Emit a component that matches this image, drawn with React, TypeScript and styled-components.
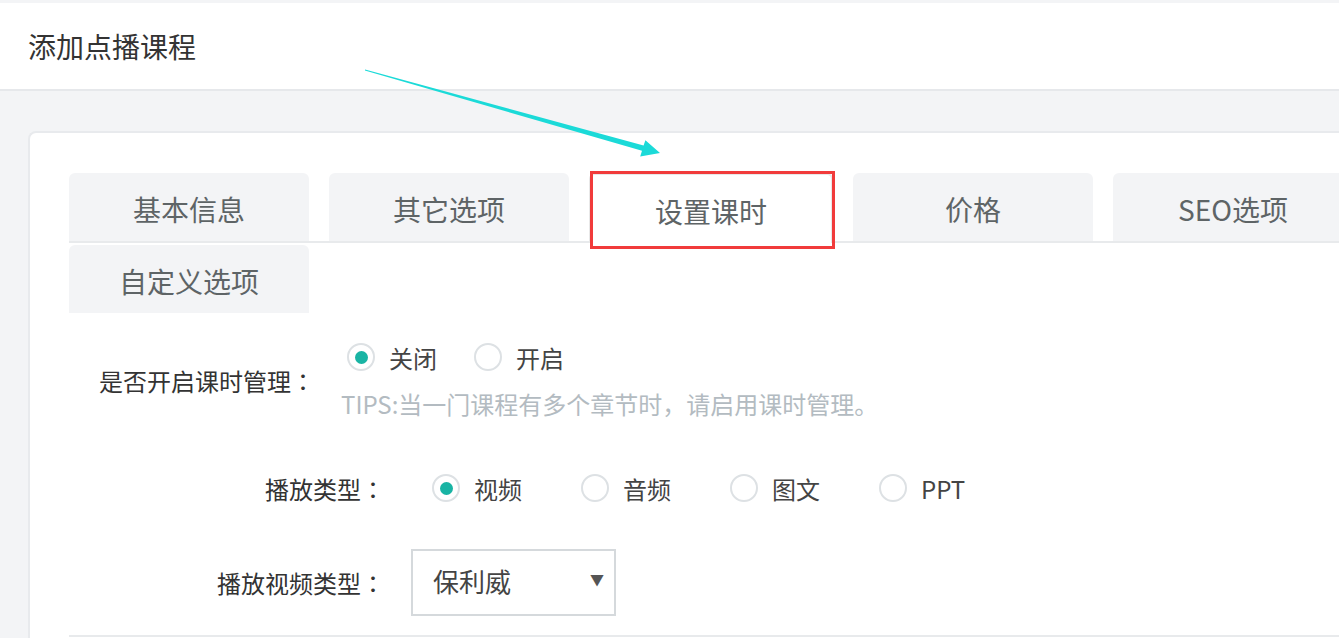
import React from 'react';
import styled, { createGlobalStyle } from 'styled-components';

const tabs = ['基本信息', '其它选项', '设置课时', '价格', 'SEO选项', '自定义选项'];
const activeTab = 2;

const App: React.FC = () => {
  return (
    <Page>
      <GlobalStyle />
      <Header>
        <Title>添加点播课程</Title>
      </Header>
      <Main>
        <Card>
          <TabBar>
            {tabs.map((t, i) => (
              <Tab key={t} $active={i === activeTab}>
                {t}
                {i === activeTab && <Highlight />}
              </Tab>
            ))}
          </TabBar>

          <FormRow $top={0}>
            <Label $width={246}>
              是否开启课时管理<Colon>：</Colon>
            </Label>
            <FieldBlock>
              <RadioGroup $offset={6} $spacing={37}>
                <RadioItem>
                  <RadioCircle $checked />
                  关闭
                </RadioItem>
                <RadioItem>
                  <RadioCircle />
                  开启
                </RadioItem>
              </RadioGroup>
              <Tips>TIPS:当一门课程有多个章节时，请启用课时管理。</Tips>
            </FieldBlock>
          </FormRow>

          <FormRow $top={48}>
            <Label $width={316}>
              播放类型<Colon>：</Colon>
            </Label>
            <RadioGroup $offset={21} $spacing={59}>
              <RadioItem>
                <RadioCircle $checked />
                视频
              </RadioItem>
              <RadioItem>
                <RadioCircle />
                音频
              </RadioItem>
              <RadioItem>
                <RadioCircle />
                图文
              </RadioItem>
              <RadioItem>
                <RadioCircle />
                PPT
              </RadioItem>
            </RadioGroup>
          </FormRow>

          <FormRow $top={43}>
            <Label $width={316}>
              播放视频类型<Colon>：</Colon>
            </Label>
            <Select>
              <span>保利威</span>
              <Caret>▼</Caret>
            </Select>
          </FormRow>

          <Divider />
        </Card>
      </Main>

      <Arrow viewBox="0 0 1339 638" width="1339" height="638">
        <polygon
          points="365.1,69.4 643.6,145.6 645.4,140.2 660,153 640.2,156.4 642,150.7 364.9,70.6"
          fill="#1bdad8"
        />
      </Arrow>
    </Page>
  );
};

export default App;

const GlobalStyle = createGlobalStyle`
  html, body {
    margin: 0;
    padding: 0;
    overflow: hidden;
    background: #f3f4f6;
  }
  body {
    font-family: "Noto Sans CJK SC", "Noto Sans", sans-serif;
  }
`;

const Page = styled.div`
  position: relative;
  width: 1339px;
  height: 638px;
  overflow: hidden;
  padding-top: 3px;
  box-sizing: border-box;
`;

const Header = styled.div`
  background: #fff;
  height: 86px;
  border-bottom: 2px solid #e6e8eb;
  display: flex;
  align-items: center;
  padding-left: 28px;
`;

const Title = styled.h1`
  margin: 0;
  font-size: 28px;
  font-weight: 400;
  color: #333;
`;

const Main = styled.div`
  padding: 40px 0 0 28px;
`;

const Card = styled.div`
  background: #fff;
  border: 2px solid #e8eaed;
  border-right: none;
  border-radius: 8px 0 0 0;
  padding: 40px 0 0 39px;
  height: 700px;
  overflow: hidden;
`;

/* the bar keeps one row high; the wrapped tab hangs below its line,
   so the bottom margin makes room for it plus the gap to the form */
const TabBar = styled.div`
  display: flex;
  flex-wrap: wrap;
  align-items: flex-start;
  column-gap: 20px;
  row-gap: 2px;
  width: 1320px;
  height: 68px;
  margin-bottom: 96px;
  border-bottom: 2px solid #e8eaec;
`;

const Tab = styled.div<{ $active?: boolean }>`
  position: relative;
  box-sizing: border-box;
  width: ${({ $active }) => ($active ? '244px' : '240px')};
  height: ${({ $active }) => ($active ? '70px' : '68px')};
  padding-top: 4px;
  line-height: 64px;
  text-align: center;
  font-size: 28px;
  color: #5e6466;
  background: ${({ $active }) => ($active ? '#fff' : '#f3f4f6')};
  border: ${({ $active }) => ($active ? '2px solid #e8e8e8' : 'none')};
  border-bottom: none;
  border-radius: 6px 6px 0 0;
  z-index: ${({ $active }) => ($active ? 1 : 0)};
`;

const Highlight = styled.div`
  position: absolute;
  left: -1px;
  top: -4px;
  right: -4px;
  bottom: -6px;
  border: 3px solid #f13b3b;
`;

const FormRow = styled.div<{ $top: number }>`
  display: flex;
  align-items: center;
  margin-top: ${({ $top }) => $top}px;
`;

const Label = styled.div<{ $width: number }>`
  width: ${({ $width }) => $width}px;
  flex-shrink: 0;
  text-align: right;
  font-size: 24px;
  color: #333;
  margin-right: 26px;
`;

const Colon = styled.span`
  font-family: "Noto Sans CJK TC", "Noto Sans CJK SC", sans-serif;
`;

const FieldBlock = styled.div`
  display: flex;
  flex-direction: column;
`;

const RadioGroup = styled.div<{ $offset: number; $spacing: number }>`
  display: flex;
  align-items: center;
  gap: ${({ $spacing }) => $spacing}px;
  margin-left: ${({ $offset }) => $offset}px;
  height: 36px;
`;

const RadioItem = styled.label`
  display: flex;
  align-items: center;
  gap: 14px;
  font-size: 24px;
  color: #444;
`;

const RadioCircle = styled.span<{ $checked?: boolean }>`
  width: 28px;
  height: 28px;
  box-sizing: border-box;
  border-radius: 50%;
  border: 2px solid #dde1e4;
  display: flex;
  align-items: center;
  justify-content: center;
  &::after {
    content: '';
    width: 13px;
    height: 13px;
    border-radius: 50%;
    background: ${({ $checked }) => ($checked ? '#19b4a4' : 'transparent')};
  }
`;

const Tips = styled.div`
  margin-top: 11px;
  line-height: 36px;
  font-size: 24px;
  color: #b3bbc1;
`;

const Select = styled.div`
  box-sizing: border-box;
  width: 205px;
  height: 67px;
  border: 2px solid #d5d9dc;
  display: flex;
  align-items: center;
  justify-content: space-between;
  padding: 0 10px 4px 20px;
  font-size: 26px;
  color: #444;
`;

const Caret = styled.span`
  font-size: 14px;
  color: #555;
  margin-top: -4px;
`;

const Divider = styled.div`
  margin-top: 19px;
  border-top: 2px solid #e8eaec;
`;

const Arrow = styled.svg`
  position: absolute;
  left: 0;
  top: 0;
  pointer-events: none;
`;
